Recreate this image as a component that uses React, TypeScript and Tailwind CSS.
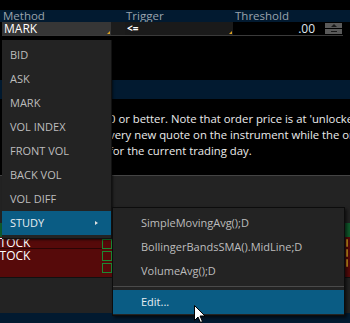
import React from "react";

const menuItems = ["BID", "ASK", "MARK", "VOL INDEX", "FRONT VOL", "BACK VOL", "VOL DIFF"];

function Cursor() {
  return (
    <svg width="13" height="19" viewBox="0 0 13 19" className="absolute left-[194px] top-[305px]">
      <path d="M0.5 0.5 L0.5 15.5 L4 12 L6.5 17.5 L8.5 16.5 L6 11 L11 11 Z" fill="#ffffff" stroke="#000000" strokeWidth="1" strokeLinejoin="round" />
    </svg>
  );
}

export default function App() {
  return (
    <div className="relative w-[350px] h-[323px] overflow-hidden bg-black font-['Open_Sans',sans-serif] text-[11px]">
      {/* base page */}
      <div className="flex flex-col">
        <div className="h-[10px] bg-black" />
        <div className="h-[12px] bg-[#021a30] flex items-center text-[#9aa3ad] text-[11.5px] leading-none">
          <div className="w-[122px] pl-[3px]">Method</div>
          <div className="w-[109px] pl-[4px]">Trigger</div>
          <div className="pl-[4px]">Threshold</div>
        </div>
        <div className="h-[13px] flex bg-black">
          <div className="w-[2px]" />
          <div className="relative w-[109px] bg-[#363636] text-white text-[12px] leading-[13px] pl-[2px]">
            MARK
            <span className="absolute right-[1px] bottom-[1px] w-0 h-0 border-l-[3px] border-l-transparent border-b-[3px] border-b-[#d9a020]" />
          </div>
          <div className="w-[14px] bg-[#1c1c1c]" />
          <div className="relative w-[108px] bg-[#1a1a1a] text-white leading-[13px] pl-[2px] text-[10px] font-bold">
            &lt;=
            <span className="absolute right-[1px] bottom-[1px] w-0 h-0 border-l-[3px] border-l-transparent border-b-[3px] border-b-[#d9a020]" />
          </div>
          <div className="w-[2px]" />
          <div className="w-[83px] bg-black text-[#dfe6f0] text-[12px] leading-[13px] text-right pr-[3px]">.00</div>
          <div className="w-[7px]" />
          <div className="w-[17px] flex flex-col justify-center gap-[1px] py-[1px]">
            <div className="h-[5px] bg-[#5a5a5a] flex items-center justify-center">
              <span className="w-0 h-0 border-l-[3px] border-r-[3px] border-b-[3px] border-l-transparent border-r-transparent border-b-[#1a1a1a]" />
            </div>
            <div className="h-[5px] bg-[#5a5a5a] flex items-center justify-center">
              <span className="w-[6px] h-[1px] bg-[#1a1a1a]" />
            </div>
          </div>
        </div>
        <div className="h-[1px] ml-[2px] w-[341px] bg-[#3a3a3a]" />
        <div className="h-[44px] bg-black" />
        <div className="h-[19px] bg-[#021a30]" />
        <div className="h-[76px] bg-black pl-[112px] pt-[12px] text-[#ececec] text-[11.3px] leading-[16px] overflow-hidden whitespace-nowrap">
          <div className="-ml-[3px]">0 or better. Note that order price is at 'unlocked'</div>
          <div className="-ml-[3px]">very new quote on the instrument while the order</div>
          <div className="-ml-[3px]">for the current trading day.</div>
        </div>
        <div className="h-[1px] bg-[#444444]" />
        <div className="h-[47px] bg-[#232323]" />
        <div className="h-[14px] bg-[#0f5a2c]" />
        <div className="h-[40px] bg-[#560a0a] flex">
          <div className="w-[102px] flex flex-col text-white text-[12px] leading-[12px] overflow-hidden whitespace-nowrap">
            <div className="h-[12px] -ml-[7px] border-b border-[#2a0505]">STOCK</div>
            <div className="h-[13px] -ml-[7px] pt-[1px]">STOCK</div>
          </div>
          <div className="w-[10px] flex flex-col gap-[2px] pt-[2px]">
            <div className="h-[10px] border border-[#1b8a33]" />
            <div className="h-[10px] border border-[#1b8a33]" />
            <div className="h-[10px] border border-[#1b8a33]" />
          </div>
          <div className="flex-1" />
          <div className="w-[5px] flex flex-col gap-[2px] pt-[2px]">
            <div className="h-[8px] w-[2px] ml-[1px] bg-[#c98a1a] rounded-full" />
            <div className="h-[8px] w-[2px] ml-[1px] bg-[#c98a1a] rounded-full" />
            <div className="h-[8px] w-[2px] ml-[1px] bg-[#c98a1a] rounded-full" />
          </div>
        </div>
        <div className="h-[36px] bg-[#232323] border-t border-[#111]" />
        <div className="h-[10px] bg-[#021a30]" />
      </div>

      {/* main dropdown menu */}
      <div className="absolute left-[2px] top-[40px] w-[110px] bg-[#232323] border-r border-b border-[#111] py-[3px] text-[#bdbdbd] shadow-[1px_1px_2px_rgba(0,0,0,0.6)]">
        {menuItems.map((m) => (
          <div key={m} className="h-[24px] flex items-center pl-[8px]">{m}</div>
        ))}
        <div className="h-[24px] flex items-center pl-[8px] bg-[#0a5c84] text-[#e8eef2] relative">
          STUDY
          <span className="absolute left-[93px] top-[10px] w-0 h-0 border-t-[2px] border-b-[2px] border-l-[3px] border-t-transparent border-b-transparent border-l-[#e0e0e0]" />
        </div>
      </div>

      {/* submenu */}
      <div className="absolute left-[112px] top-[207px] w-[233px] bg-[#232323] border border-[#0c0c0c] pt-[3px] pb-[1px] text-[#bdbdbd] shadow-[2px_2px_3px_rgba(0,0,0,0.6)]">
        <div className="h-[24px] flex items-center pl-[28px]">SimpleMovingAvg();D</div>
        <div className="h-[24px] flex items-center pl-[28px]">BollingerBandsSMA().MidLine;D</div>
        <div className="h-[24px] flex items-center pl-[28px]">VolumeAvg();D</div>
        <div className="h-[7px] flex items-center"><div className="h-[1px] w-full bg-[#4a4a4a]" /></div>
        <div className="h-[24px] flex items-center pl-[28px] bg-[#0a5c84] text-[#e8eef2]">Edit...</div>
      </div>

      <Cursor />
    </div>
  );
}
